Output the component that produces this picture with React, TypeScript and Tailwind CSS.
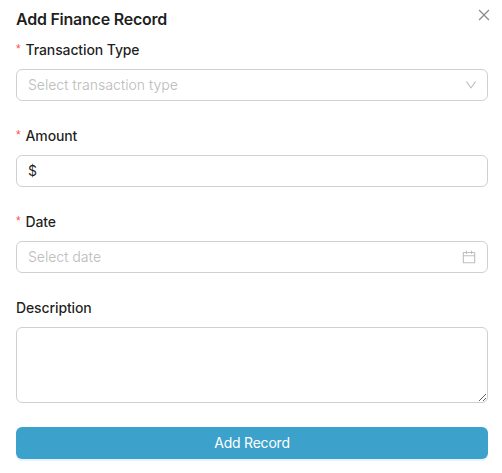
import type { ReactNode } from "react";
import { AiOutlineCalendar, AiOutlineClose, AiOutlineDown } from "react-icons/ai";

type FieldProps = { label: string; required?: boolean; children: ReactNode };

function Field({ label, required, children }: FieldProps) {
  return (
    <div className="mb-6 flex flex-col gap-2">
      <div className="flex h-[22px] items-center text-sm leading-[22px] font-medium tracking-[-0.11px]">
        {required && (
          <span className="w-[9.5px] pb-0.5 font-['Liberation_Sans'] text-xs leading-none font-normal text-[#ff4d4f]">
            *
          </span>
        )}
        <span>{label}</span>
      </div>
      {children}
    </div>
  );
}

const box =
  "flex h-8 items-center justify-between rounded-md border border-[#d0d0d0] bg-white px-[11px] text-sm tracking-[-0.12px]";

export default function App() {
  return (
    <div className="h-[473px] w-[502px] bg-white pt-[7px] pr-[14px] pl-4 font-[Inter,sans-serif] text-black/88">
      <div className="flex h-8 justify-between">
        <h1 className="text-base leading-6 font-semibold tracking-[-0.24px]">Add Finance Record</h1>
        <button className="-mr-1 h-4 text-black/45" aria-label="Close">
          <AiOutlineClose size={16} />
        </button>
      </div>
      <form>
        <Field label="Transaction Type" required>
          <div className={box}>
            <span className="text-black/25">Select transaction type</span>
            <AiOutlineDown size={14} className="-mr-0.5 text-black/25" />
          </div>
        </Field>
        <Field label="Amount" required>
          <div className={box}>
            <span>$</span>
          </div>
        </Field>
        <Field label="Date" required>
          <div className={box}>
            <span className="text-black/25">Select date</span>
            <AiOutlineCalendar size={16} className="-mr-px text-black/25" />
          </div>
        </Field>
        <Field label="Description">
          <textarea className="block h-[76px] w-full resize-y rounded-md border border-[#d0d0d0] px-[11px] py-1 text-sm outline-none" />
        </Field>
        <button
          type="button"
          className="block h-8 w-full rounded-md bg-[#3ca1cb] text-sm tracking-[-0.22px] text-white shadow-[0_2px_0_rgba(5,145,255,0.1)]"
        >
          Add Record
        </button>
      </form>
    </div>
  );
}
